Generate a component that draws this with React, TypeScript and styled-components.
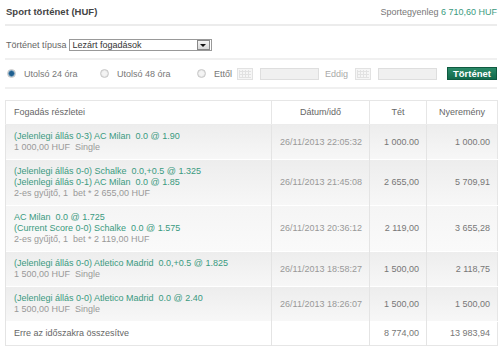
import { FC } from 'react';
import styled, { createGlobalStyle } from 'styled-components';

const GlobalStyle = createGlobalStyle`
    body {
        margin: 0;
        background: #fff;
        font-family: 'Liberation Sans', Arial, sans-serif;
        font-size: 9px;
        color: #666;
    }
`;

const Page = styled.div`
    width: 500px;
    padding: 0 3px 0 5px;
    box-sizing: border-box;
`;

const TopBar = styled.div`
    display: flex;
    align-items: center;
    justify-content: space-between;
    box-sizing: border-box;
    height: 26px;
    padding: 0 0 1px 1px;
    border-bottom: 2px solid #ececec;
`;

const Title = styled.h1`
    margin: 0;
    font-size: 9.5px;
    font-weight: bold;
    color: #444;
`;

const Balance = styled.div`
    color: #777;
    span {
        color: #3a9a80;
    }
`;

const FilterRow = styled.div<{ $height: number; $top?: number }>`
    display: flex;
    align-items: center;
    box-sizing: border-box;
    height: ${(p) => p.$height}px;
    padding: ${(p) => p.$top || 0}px 0 0 1px;
    border-bottom: 2px solid #f0f0f0;
`;

const Label = styled.span`
    color: #666;
    margin-right: 2px;
`;

const Select = styled.div`
    display: flex;
    align-items: center;
    justify-content: space-between;
    width: 143px;
    height: 12px;
    border: 1px solid #999;
    box-sizing: border-box;
    padding-left: 3px;
    color: #333;
    font-size: 9px;
`;

const SelectArrow = styled.div`
    width: 11px;
    height: 8px;
    margin-right: 1px;
    border: 1px solid #888;
    background: linear-gradient(#f4f4f4, #d8d8d8);
    display: flex;
    align-items: center;
    justify-content: center;
    &::after {
        content: '';
        border-left: 3px solid transparent;
        border-right: 3px solid transparent;
        border-top: 3px solid #111;
    }
`;

const RadioOption = styled.label<{ $width?: number }>`
    display: flex;
    align-items: center;
    flex: none;
    width: ${(p) => (p.$width ? `${p.$width}px` : 'auto')};
    color: #777;
`;

const Radio = styled.span<{ $checked?: boolean }>`
    display: inline-block;
    width: 9px;
    height: 9px;
    margin: 0 8px 0 1px;
    border-radius: 50%;
    border: 1px solid #c8c8c8;
    box-sizing: border-box;
    background: ${(p) =>
        p.$checked
            ? 'radial-gradient(circle, #1f5f8f 0 2px, #7aa3c0 3px, #e6e6e6 4px)'
            : 'radial-gradient(circle, #f4f4f4 0 2px, #dcdcdc 4px)'};
`;

const CalendarIcon = styled.span<{ $left?: number }>`
    display: inline-block;
    flex: none;
    width: 16px;
    height: 12px;
    margin: 0 7px 0 ${(p) => p.$left ?? 7}px;
    border: 1px solid #e2e2e2;
    box-sizing: border-box;
    background-color: #f6f6f6;
    background-image: repeating-linear-gradient(90deg, #e2e2e2 0 1px, transparent 1px 3px),
        repeating-linear-gradient(0deg, #e2e2e2 0 1px, transparent 1px 3px);
    background-size: 12px 8px;
    background-position: 1px 1px;
    background-repeat: no-repeat;
`;

const DateInput = styled.span`
    display: inline-block;
    flex: none;
    width: 59px;
    height: 12px;
    border: 1px solid #dedede;
    box-sizing: border-box;
    background: #f0f0f0;
`;

const DateLabel = styled.span`
    color: #aaa;
    margin-left: 6px;
`;

const SubmitButton = styled.button`
    margin-left: auto;
    width: 50px;
    height: 13px;
    padding: 0;
    border: 1px solid #0f5a40;
    background: linear-gradient(#2a8a68, #126a4c);
    color: #fff;
    font-family: 'Liberation Sans', Arial, sans-serif;
    font-size: 9.5px;
    font-weight: bold;
    line-height: 11px;
`;

const Table = styled.table`
    margin-top: 11px;
    width: 492px;
    border-collapse: collapse;
    table-layout: fixed;
    border: 1px solid #e6e6e6;
    line-height: 11px;
`;

const HeadCell = styled.th<{ $align?: string }>`
    padding: 6px 8px;
    font-weight: normal;
    color: #666;
    text-align: ${(p) => p.$align || 'center'};
    border-left: 1px solid #e6e6e6;
    border-bottom: 1px solid #ececec;
`;

const BodyRow = styled.tr<{ $light?: boolean }>`
    background: ${(p) =>
        p.$light ? 'linear-gradient(#f5f5f5, #fafafa)' : 'linear-gradient(#ededed, #f7f7f7)'};
    border-bottom: 1px solid #fff;
`;

const Cell = styled.td<{ $align?: string; $tone?: string }>`
    padding: 6px 7px 6px 8px;
    vertical-align: middle;
    text-align: ${(p) => p.$align || 'left'};
    color: ${(p) => p.$tone || '#777'};
    border-left: 1px solid #e4e4e4;
    white-space: nowrap;
`;

const TotalRow = styled.tr`
    background: #fff;
`;

const Pick = styled.div`
    color: #3a9a80;
    white-space: pre;
`;

const Meta = styled.div`
    color: #999;
    white-space: pre;
`;

type Bet = {
    picks: string[];
    meta: string;
    date: string;
    stake: string;
    win: string;
    light?: boolean;
};

const bets: Bet[] = [
    {
        picks: ['(Jelenlegi állás 0-3) AC Milan  0.0 @ 1.90'],
        meta: '1 000,00 HUF  Single',
        date: '26/11/2013 22:05:32',
        stake: '1 000.00',
        win: '1 000.00',
    },
    {
        picks: [
            '(Jelenlegi állás 0-0) Schalke  0.0,+0.5 @ 1.325',
            '(Jelenlegi állás 0-1) AC Milan  0.0 @ 1.85',
        ],
        meta: '2-es gyűjtő, 1  bet * 2 655,00 HUF',
        date: '26/11/2013 21:45:08',
        stake: '2 655,00',
        win: '5 709,91',
    },
    {
        picks: ['AC Milan  0.0 @ 1.725', '(Current Score 0-0) Schalke  0.0 @ 1.575'],
        meta: '2-es gyűjtő, 1  bet * 2 119,00 HUF',
        date: '26/11/2013 20:36:12',
        stake: '2 119,00',
        win: '3 655,28',
        light: true,
    },
    {
        picks: ['(Jelenlegi állás 0-0) Atletico Madrid  0.0,+0.5 @ 1.825'],
        meta: '1 500,00 HUF  Single',
        date: '26/11/2013 18:58:27',
        stake: '1 500,00',
        win: '2 118,75',
    },
    {
        picks: ['(Jelenlegi állás 0-0) Atletico Madrid  0.0 @ 2.40'],
        meta: '1 500,00 HUF  Single',
        date: '26/11/2013 18:26:07',
        stake: '1 500,00',
        win: '1 500,00',
    },
];

const App: FC = () => {
    return (
        <Page>
            <GlobalStyle />
            <TopBar>
                <Title>Sport történet (HUF)</Title>
                <Balance>
                    Sportegyenleg <span>6 710,60 HUF</span>
                </Balance>
            </TopBar>
            <FilterRow $height={34} $top={6}>
                <Label>Történet típusa</Label>
                <Select>
                    Lezárt fogadások
                    <SelectArrow />
                </Select>
            </FilterRow>
            <FilterRow $height={29}>
                <RadioOption $width={93}>
                    <Radio $checked />
                    Utolsó 24 óra
                </RadioOption>
                <RadioOption $width={97}>
                    <Radio />
                    Utolsó 48 óra
                </RadioOption>
                <RadioOption>
                    <Radio />
                    Ettől
                </RadioOption>
                <CalendarIcon $left={5} />
                <DateInput />
                <DateLabel>Eddig</DateLabel>
                <CalendarIcon />
                <DateInput />
                <SubmitButton>Történet</SubmitButton>
            </FilterRow>
            <Table>
                <colgroup>
                    <col style={{ width: 266 }} />
                    <col style={{ width: 98 }} />
                    <col style={{ width: 57 }} />
                    <col style={{ width: 71 }} />
                </colgroup>
                <thead>
                    <tr>
                        <HeadCell $align="left">Fogadás részletei</HeadCell>
                        <HeadCell>Dátum/idő</HeadCell>
                        <HeadCell>Tét</HeadCell>
                        <HeadCell>Nyeremény</HeadCell>
                    </tr>
                </thead>
                <tbody>
                    {bets.map((bet) => (
                        <BodyRow key={bet.date} $light={bet.light}>
                            <Cell>
                                {bet.picks.map((pick) => (
                                    <Pick key={pick}>{pick}</Pick>
                                ))}
                                <Meta>{bet.meta}</Meta>
                            </Cell>
                            <Cell $align="center" $tone="#999">
                                {bet.date}
                            </Cell>
                            <Cell $align="right">{bet.stake}</Cell>
                            <Cell $align="right">{bet.win}</Cell>
                        </BodyRow>
                    ))}
                    <TotalRow>
                        <Cell $tone="#666">Erre az időszakra összesítve</Cell>
                        <Cell />
                        <Cell $align="right">8 774,00</Cell>
                        <Cell $align="right">13 983,94</Cell>
                    </TotalRow>
                </tbody>
            </Table>
        </Page>
    );
};

export default App;
